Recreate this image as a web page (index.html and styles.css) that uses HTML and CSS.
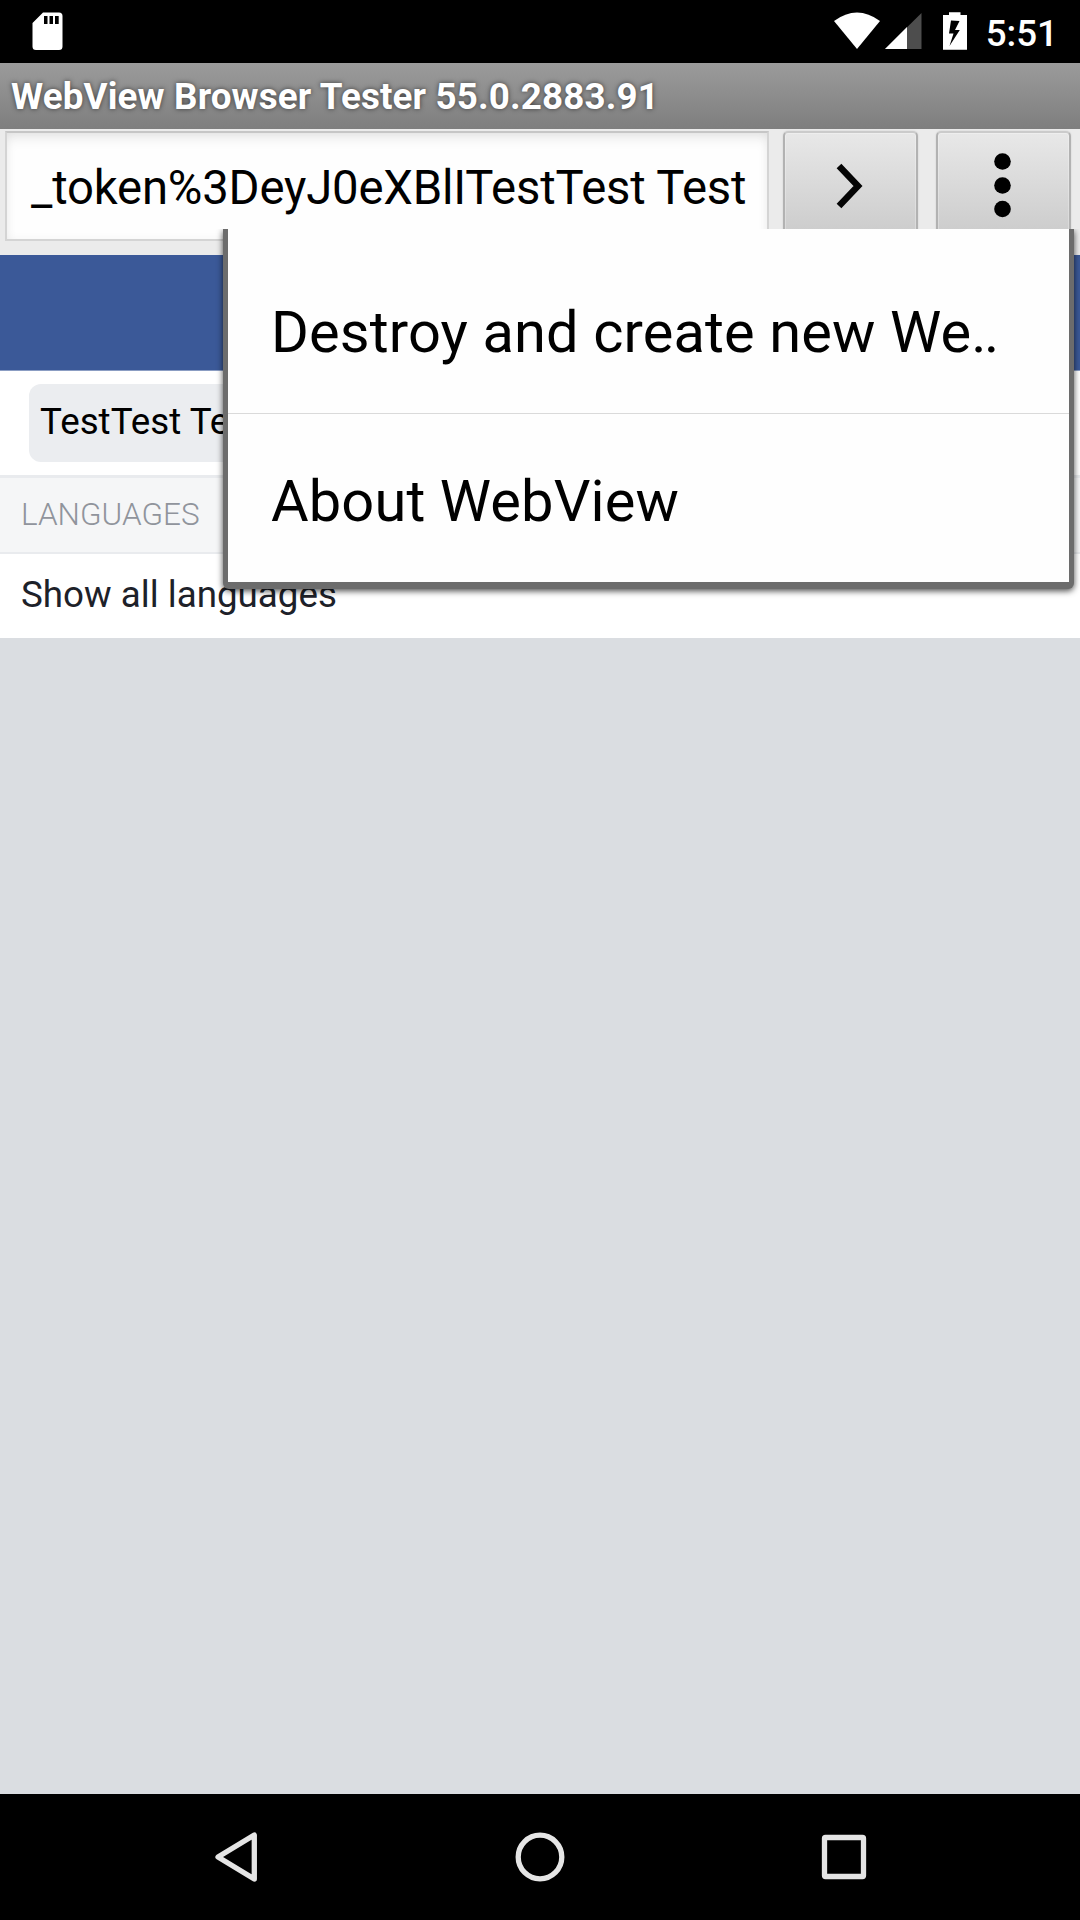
FILE: index.html
```html
<!DOCTYPE html>
<html lang="en">
<head>
<meta charset="utf-8">
<title>WebView Browser Tester</title>
<link rel="stylesheet" href="styles.css">
</head>
<body>
<div class="screen">
  <header class="status-bar">
    <svg class="sd-icon" width="31" height="39" viewBox="0 0 31 39"><path fill="#fff" fill-rule="evenodd" d="M11 .5H27Q30.500.5 30.500 4V34.500Q30.500 38 27 38H4Q.5 38 .5 34.500V11ZM12 4V12H15.500V4ZM17.500 4V12H21V4ZM23 4V12H26.700V4Z"/></svg>
    <div class="status-right">
      <svg width="133" height="40" viewBox="0 0 133 40">
        <path fill="#fff" d="M0 9Q23-8 46 9L23 37Z"/>
        <path fill="#4d4d4d" d="M87.500 1V37H51Z"/>
        <path fill="#fff" d="M73 15V37H51Z"/>
        <path fill="#fff" fill-rule="evenodd" d="M109 3H115V.3H126.500V3H133V37.700H109ZM117 8.500L115 21.500H119.500L115.500 34L125.800 18H121L125.500 9Z"/>
      </svg>
      <span class="clock">5:51</span>
    </div>
  </header>
  <div class="title-bar"><h1>WebView Browser Tester 55.0.2883.91</h1></div>
  <div class="toolbar">
    <div class="url-field"><span>_token%3DeyJ0eXBlITestTest Test</span></div>
    <button class="tool-button" aria-label="Go">
      <svg width="32" height="48" viewBox="0 0 32 48"><path d="M6 4L25 24L6 44" fill="none" stroke="#050505" stroke-width="6.500"/></svg>
    </button>
    <button class="tool-button" aria-label="Menu">
      <svg class="dots" width="18" height="66" viewBox="0 0 18 66" fill="#000"><circle cx="9.500" cy="8.500" r="8.300"/><circle cx="9.500" cy="32.500" r="8.300"/><circle cx="9.500" cy="56" r="8.300"/></svg>
    </button>
  </div>
  <main class="page">
    <div class="brand-bar"></div>
    <div class="search-row"><div class="search-field">TestTest Test</div></div>
    <h2 class="section-title">LANGUAGES</h2>
    <div class="list-item">Show all languages</div>
  </main>
  <nav class="nav-bar">
    <svg width="50" height="56" viewBox="0 0 50 56"><path d="M43.300 6V50L7 28Z"/></svg>
    <svg width="56" height="56" viewBox="0 0 56 56"><circle cx="28" cy="28" r="21.800"/></svg>
    <svg width="50" height="56" viewBox="0 0 50 56"><rect x="5.500" y="8.500" width="39" height="39" rx="1"/></svg>
  </nav>
  <div class="menu-clip">
    <div class="popup-menu">
      <div class="menu-item first">Destroy and create new We<span class="ellipsis">..</span></div>
      <div class="menu-item">About WebView</div>
    </div>
  </div>
</div>
</body>
</html>
```
FILE: styles.css
```css
* { box-sizing: border-box; }
body { margin: 0; font-family: Roboto, sans-serif; color: #000; }
svg { display: block; flex: none; overflow: visible; }
.screen { position: relative; display: flex; flex-direction: column; width: 1080px; height: 1920px; overflow: hidden; background: #dadde1; }

.status-bar { height: 63px; flex: none; display: flex; justify-content: space-between; align-items: flex-start; padding: 12px 22px 0 32px; background: #000; }
.status-right { display: flex; gap: 19px; }
.clock { color: #fff; font-size: 36.750px; font-weight: 500; line-height: 43px; }

.title-bar { height: 66px; flex: none; padding-left: 11px; background: linear-gradient(#9b9b9b, #7e7e7e); }
.title-bar h1 { margin: 0; color: #fff; font-size: 36.750px; line-height: 68px; font-weight: 700; letter-spacing: .15px; white-space: nowrap; text-shadow: 0 0 5px rgba(0,0,0,.6); }

.toolbar { height: 126px; flex: none; display: flex; padding: 2px 8px 14px 5px; background: #ebebeb; }
.url-field { width: 764px; height: 110px; padding: 4px 0 0 24px; overflow: hidden; white-space: nowrap; font-size: 47.250px; line-height: 102px; letter-spacing: -.18px; background: #fefefe; border: 2px solid #d4d4d4; border-top-color: #c6c6c6; box-shadow: inset 0 8px 14px -4px rgba(0,0,0,.1), inset 0 0 10px rgba(0,0,0,.04); }
.tool-button { width: 135px; height: 115px; margin-left: 14px; padding: 0 3px 6px 0; display: flex; align-items: center; justify-content: center; border: 2px solid #b2b2b2; border-top-color: #cbcbcb; border-radius: 5px; background: linear-gradient(#e8e8e8, #c9c9c9); box-shadow: inset 0 0 0 1px rgba(255,255,255,.25), 0 0 2px rgba(0,0,0,.12); }
.tool-button + .tool-button { margin-left: 18px; }

.page { flex: 1; display: flex; flex-direction: column; }
.brand-bar { height: 116px; background: #3b5998; border-bottom: 1px solid #8b9dc3; }
.search-row { height: 104px; padding: 13px 29px; background: #fff; }
.search-field { height: 78px; border-radius: 12px; padding-left: 11px; background: #ebedf0; font-size: 36.750px; line-height: 76px; }
.section-title { height: 79px; margin: 0; padding-left: 21px; font-size: 31.500px; line-height: 73px; font-weight: 300; color: #90949c; background: #f5f6f7; border-top: 3px solid #e9ebee; border-bottom: 2px solid #e9ebee; }
.list-item { height: 84px; padding-left: 21px; background: #fff; color: #1d2129; font-size: 36.750px; line-height: 82px; }

.nav-bar { height: 126px; flex: none; display: flex; align-items: center; justify-content: space-between; padding: 0 211px; background: #000; }
.nav-bar svg { fill: none; stroke: #e5e5e5; stroke-width: 5.300; stroke-linejoin: round; }

/* The popup is cut off along its top edge, so its frame shows on three sides. */
.menu-clip { position: absolute; top: 229px; left: 210px; width: 870px; height: 380px; overflow: hidden; }
.popup-menu { width: 851px; margin-left: 13px; border: solid #6c6c6c; border-width: 0 5px 7px; border-radius: 0 0 6px 6px; background: #fefefe; box-shadow: 0 2px 6px rgba(0,0,0,.7); }
.menu-item { height: 168px; padding: 6px 43px 0; font-size: 57.750px; line-height: 162px; letter-spacing: .13px; white-space: nowrap; }
.menu-item.first { height: 185px; padding-top: 22px; border-bottom: 1px solid #dadada; }
.ellipsis { letter-spacing: -2.500px; }
```
